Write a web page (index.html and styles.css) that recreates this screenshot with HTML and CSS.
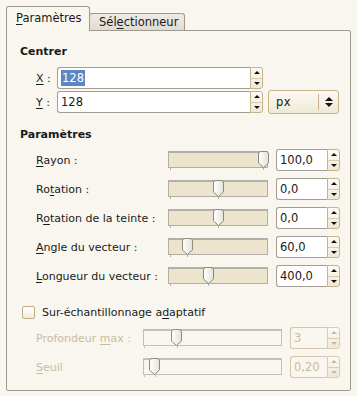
FILE: index.html
```html
<!DOCTYPE html>
<html lang="fr">
<head>
    <meta charset="UTF-8">
    <title>Paramètres</title>
    <link rel="stylesheet" href="styles.css">
</head>
<body>
    <div class="tabs">
        <div class="tab active"><u>P</u>aramètres</div>
        <div class="tab">Sél<u>e</u>ctionneur</div>
    </div>
    <div class="panel">
        <div class="heading first">Centrer</div>
        <div class="center_row">
            <div class="label"><u>X</u> :</div>
            <div class="spin">
                <div class="entry"><span class="sel">128</span></div>
                <div class="arrows"><span class="up"></span><span class="down"></span></div>
            </div>
        </div>
        <div class="center_row second">
            <div class="label"><u>Y</u> :</div>
            <div class="spin">
                <div class="entry">128</div>
                <div class="arrows"><span class="up"></span><span class="down"></span></div>
            </div>
            <div class="combo">
                <span class="combo_text">px</span>
                <span class="combo_sep"></span>
                <span class="combo_arrows"><span class="up"></span><span class="down"></span></span>
            </div>
        </div>

        <div class="heading">Paramètres</div>
        <div class="param_rows">
            <div class="param_row">
                <div class="label"><u>R</u>ayon :</div>
                <div class="scale"><div class="trough"></div><span class="tick" style="left:2px"></span><span class="tick" style="left:95px"></span><span class="knob" style="left:90px"></span></div>
                <div class="spin"><div class="entry">100,0</div><div class="arrows"><span class="up"></span><span class="down"></span></div></div>
            </div>
            <div class="param_row">
                <div class="label">Ro<u>t</u>ation :</div>
                <div class="scale"><div class="trough"></div><span class="tick" style="left:2px"></span><span class="tick" style="left:50px"></span><span class="knob" style="left:45px"></span></div>
                <div class="spin"><div class="entry">0,0</div><div class="arrows"><span class="up"></span><span class="down"></span></div></div>
            </div>
            <div class="param_row">
                <div class="label">R<u>o</u>tation de la teinte :</div>
                <div class="scale"><div class="trough"></div><span class="tick" style="left:2px"></span><span class="tick" style="left:50px"></span><span class="knob" style="left:45px"></span></div>
                <div class="spin"><div class="entry">0,0</div><div class="arrows"><span class="up"></span><span class="down"></span></div></div>
            </div>
            <div class="param_row">
                <div class="label"><u>A</u>ngle du vecteur :</div>
                <div class="scale"><div class="trough"></div><span class="tick" style="left:2px"></span><span class="tick" style="left:19px"></span><span class="knob" style="left:14px"></span></div>
                <div class="spin"><div class="entry">60,0</div><div class="arrows"><span class="up"></span><span class="down"></span></div></div>
            </div>
            <div class="param_row">
                <div class="label"><u>L</u>ongueur du vecteur :</div>
                <div class="scale"><div class="trough"></div><span class="tick" style="left:2px"></span><span class="tick" style="left:40px"></span><span class="knob" style="left:35px"></span></div>
                <div class="spin"><div class="entry">400,0</div><div class="arrows"><span class="up"></span><span class="down"></span></div></div>
            </div>
        </div>

        <div class="check_row">
            <span class="checkbox"></span>
            <span>Sur-échantillonnage a<u>d</u>aptatif</span>
        </div>
        <div class="param_rows disabled">
            <div class="param_row">
                <div class="label">Profondeur <u>m</u>ax :</div>
                <div class="scale"><div class="trough"></div><span class="tick" style="left:1px"></span><span class="tick" style="left:34px"></span><span class="knob" style="left:28px"></span></div>
                <div class="spin"><div class="entry">3</div><div class="arrows"><span class="up"></span><span class="down"></span></div></div>
            </div>
            <div class="param_row">
                <div class="label"><u>S</u>euil</div>
                <div class="scale"><div class="trough"></div><span class="tick" style="left:1px"></span><span class="tick" style="left:12px"></span><span class="knob" style="left:6px"></span></div>
                <div class="spin"><div class="entry">0,20</div><div class="arrows"><span class="up"></span><span class="down"></span></div></div>
            </div>
        </div>
    </div>
</body>
</html>
```

FILE: styles.css
```css
* {
    margin: 0px;
    padding: 0px;
    box-sizing: border-box;
}

body {
    background-color: #f8f6ef;
    color: #1a1a1a;
    font-family: "DejaVu Sans", sans-serif;
    font-size: 11px;
    padding: 6px 6px 0px 6px;
}

u {
    text-decoration: underline;
    text-underline-offset: 2px;
}

/* tabs */

.tabs {
    display: flex;
    align-items: flex-end;
    height: 25px;
    position: relative;
    z-index: 1;
}

.tab {
    border: 1px solid #9e9a91;
    border-bottom: none;
    border-radius: 3px 3px 0px 0px;
    padding-left: 9px;
    padding-right: 6px;
    white-space: nowrap;
}

.tab.active {
    width: 84px;
    height: 25px;
    line-height: 22px;
    font-size: 11.5px;
    background-color: #f8f6ef;
}

.tab:not(.active) {
    width: 96px;
    height: 17px;
    line-height: 16px;
    font-size: 11.5px;
    margin-bottom: 1px;
    margin-left: -1px;
    background-image: linear-gradient(#eeebe4, #e0dcd3);
}

.panel {
    margin-top: -1px;
    width: 345px;
    height: 361px;
    border: 1px solid #9e9a91;
    border-radius: 0px 2px 2px 2px;
    padding-left: 13px;
    padding-right: 10px;
}

.heading {
    font-weight: bold;
    height: 14px;
    line-height: 14px;
    margin-top: 15px;
}

.heading.first {
    margin-top: 14px;
}

/* centre rows */

.center_row {
    display: flex;
    align-items: center;
    margin-left: 16px;
    height: 22px;
    margin-top: 8px;
}

.center_row.second {
    margin-top: 2px;
}

.center_row .label {
    width: 21px;
}

.center_row .spin {
    width: 206px;
}

.sel {
    background-color: #5d87c0;
    color: white;
    padding: 1px 1px;
}

.combo {
    display: flex;
    align-items: center;
    width: 71px;
    height: 24px;
    margin-left: 5px;
    border: 1px solid #c6b38b;
    border-radius: 3px;
    background-image: linear-gradient(#fcfaf4, #efe8d6);
}

.combo_text {
    flex: 1;
    padding-left: 7px;
    font-size: 11.5px;
    letter-spacing: 0.5px;
}

.combo_sep {
    width: 1px;
    height: 16px;
    background-color: #c6b38b;
    margin-right: 6px;
}

.combo_arrows {
    display: flex;
    flex-direction: column;
    gap: 2px;
    margin-right: 5px;
}

/* spin buttons */

.spin {
    display: flex;
    height: 22px;
}

.entry {
    flex: 1;
    background-color: white;
    border: 1px solid #a29e95;
    border-right: none;
    border-radius: 3px 0px 0px 3px;
    padding-left: 3px;
    line-height: 20px;
    font-size: 11.5px;
    overflow: hidden;
    white-space: nowrap;
}

.arrows {
    width: 13px;
    display: flex;
    flex-direction: column;
    border: 1px solid #c6b38b;
    border-radius: 0px 3px 3px 0px;
    background-image: linear-gradient(#fdfbf6, #efe8d6);
}

.arrows span {
    flex: 1;
    display: flex;
    align-items: center;
    justify-content: center;
}

.arrows .up {
    border-bottom: 1px solid #d8cbb0;
}

.arrows .up::after,
.combo_arrows .up::after {
    content: "";
    display: block;
    border-left: 3px solid transparent;
    border-right: 3px solid transparent;
    border-bottom: 3px solid #111;
}

.arrows .down::after,
.combo_arrows .down::after {
    content: "";
    display: block;
    border-left: 3px solid transparent;
    border-right: 3px solid transparent;
    border-top: 3px solid #111;
}

.combo_arrows .up::after {
    border-left-width: 4px;
    border-right-width: 4px;
    border-bottom-width: 4px;
}

.combo_arrows .down::after {
    border-left-width: 4px;
    border-right-width: 4px;
    border-top-width: 4px;
}

/* parameter rows */

.param_rows {
    display: flex;
    flex-direction: column;
    gap: 7px;
    margin-left: 16px;
    margin-top: 7px;
}

.param_row {
    display: grid;
    grid-template-columns: 124px 100px 64px;
    column-gap: 8px;
    height: 22px;
    align-items: center;
}

.label {
    white-space: nowrap;
}

.scale {
    position: relative;
    height: 22px;
}

.trough {
    margin-top: 2px;
    height: 17px;
    border: 1px solid #b3afa6;
    border-top-width: 2px;
    background-color: #ede4cd;
}

.tick {
    position: absolute;
    top: 18px;
    width: 1px;
    height: 3px;
    background-color: #b3afa6;
}

.knob {
    position: absolute;
    top: 2px;
    width: 11px;
    height: 17px;
    background-image: url("data:image/svg+xml,%3Csvg xmlns='http://www.w3.org/2000/svg' width='11' height='17'%3E%3Cdefs%3E%3ClinearGradient id='g' x1='0' x2='1'%3E%3Cstop offset='0' stop-color='%23ffffff'/%3E%3Cstop offset='1' stop-color='%23e6e2da'/%3E%3C/linearGradient%3E%3C/defs%3E%3Cpath d='M.5 3Q.5.5 3 .5H8Q10.5.5 10.5 3V12L5.5 16.5L.5 12Z' fill='url(%23g)' stroke='%238d8980'/%3E%3C/svg%3E");
}

/* check row and disabled rows */

.check_row {
    display: flex;
    align-items: center;
    gap: 7px;
    height: 19px;
    margin-top: 16px;
    margin-left: 2px;
}

.checkbox {
    width: 13px;
    height: 13px;
    border: 1px solid #c2ad83;
    border-radius: 2px;
    background-image: linear-gradient(#ffffff, #f2ecdf);
}

.param_rows.disabled {
    margin-top: 5px;
    color: #cbbc9e;
}

.disabled .param_row {
    grid-template-columns: 99px 139px 50px;
}

.disabled .entry {
    background-color: #f8f6ef;
    border-color: #d3c6aa;
}

.disabled .arrows {
    border-color: #d9ccaf;
}

.disabled .arrows .up::after {
    border-bottom-color: #c9b99b;
}

.disabled .arrows .down::after {
    border-top-color: #c9b99b;
}

.disabled .trough {
    background-color: #f8f6ef;
    border-color: #c4c0b8;
}

.disabled .tick {
    background-color: #c4c0b8;
}
```
